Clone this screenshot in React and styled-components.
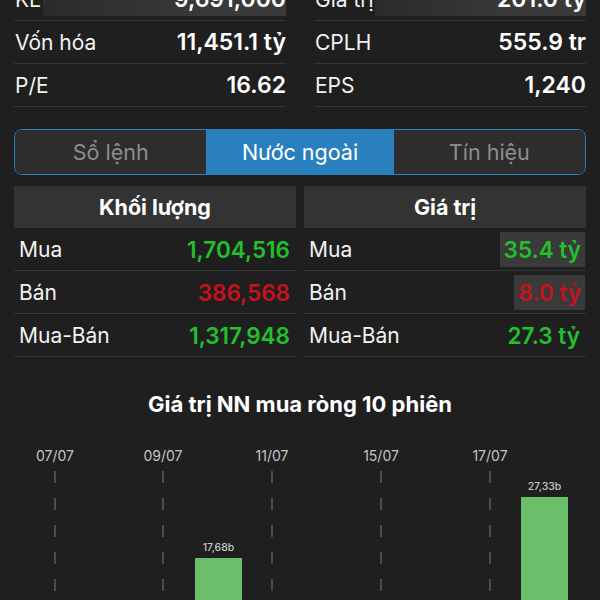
import React from "react";
import styled, { createGlobalStyle } from "styled-components";

const GlobalStyle = createGlobalStyle`
  html, body {
    margin: 0;
    padding: 0;
    background: #1f1f1f;
  }
  body {
    font-family: Inter, "Noto Sans", "DejaVu Sans", sans-serif;
  }
`;

const green = "#22c02c";
const red = "#c8111b";
const blue = "#2a7fbf";

const Page = styled.div`
  width: 600px;
  height: 600px;
  overflow: hidden;
  background: #1f1f1f;
  color: #fff;
`;

const Stats = styled.div`
  display: grid;
  grid-template-columns: 1fr 1fr;
  column-gap: 28px;
  padding: 0 14px;
  margin-top: -22px;
`;

const StatColumn = styled.div`
  display: flex;
  flex-direction: column;
`;

const StatRow = styled.div`
  height: 43px;
  display: flex;
  align-items: center;
  justify-content: space-between;
  border-bottom: 1px solid #363636;
  box-sizing: border-box;
  font-size: 21px;
`;

const StatLabel = styled.span`
  padding-left: 1px;
  color: #f2f2f2;
`;

const StatValue = styled.span`
  font-weight: 600;
  font-size: 23px;
  color: #fff;
  padding: 3px 0 3px 4px;
  ${({ flash }) =>
    flash &&
    `flex: 1;
     text-align: right;
     margin-left: ${flash}px;
     background: linear-gradient(90deg, #2b2b2b, #383838 60%, #3a3a3a);`}
`;

const Tabs = styled.div`
  margin: 22px 14px 0;
  height: 46px;
  display: flex;
  border: 1.5px solid ${blue};
  border-radius: 8px;
  overflow: hidden;
  box-sizing: border-box;
`;

const Tab = styled.div`
  flex: ${({ grow }) => grow};
  display: flex;
  align-items: center;
  justify-content: center;
  font-size: 21.5px;
  background: ${({ active }) => (active ? blue : "#2d2d2d")};
  color: ${({ active }) => (active ? "#fff" : "#8d8d8d")};
`;

const Tables = styled.div`
  display: grid;
  grid-template-columns: 1fr 1fr;
  column-gap: 8px;
  margin: 11px 14px 0;
`;

const Table = styled.div`
  display: flex;
  flex-direction: column;
`;

const TableHeader = styled.div`
  height: 42px;
  display: flex;
  align-items: center;
  justify-content: center;
  background: #333;
  font-size: 21.5px;
  font-weight: 700;
  color: #fff;
`;

const TableRow = styled.div`
  height: 43px;
  display: flex;
  align-items: center;
  justify-content: space-between;
  border-bottom: 1px solid #363636;
  box-sizing: border-box;
  padding: 1px 1px 0 5px;
  font-size: 21px;
`;

const RowLabel = styled.span`
  color: #f2f2f2;
`;

const RowValue = styled.span`
  font-size: 22.5px;
  font-weight: 600;
  color: ${({ tone }) => (tone === "down" ? red : green)};
  padding: ${({ boxed }) => (boxed ? "4px 4px" : "0 5px")};
  background: ${({ boxed }) => (boxed ? "#3a3a3a" : "transparent")};
`;

const ChartTitle = styled.div`
  margin-top: 34px;
  text-align: center;
  font-size: 22px;
  font-weight: 700;
  color: #fff;
`;

const ChartWrap = styled.div`
  margin-top: 20px;
  height: 170px;
`;

const stats = [
  [
    { label: "KL", value: "9,691,000", flash: 2 },
    { label: "Vốn hóa", value: "11,451.1 tỷ" },
    { label: "P/E", value: "16.62" },
  ],
  [
    { label: "Giá trị", value: "201.0 tỷ", flash: 1 },
    { label: "CPLH", value: "555.9 tr" },
    { label: "EPS", value: "1,240" },
  ],
];

const volume = [
  { label: "Mua", value: "1,704,516", tone: "up" },
  { label: "Bán", value: "386,568", tone: "down" },
  { label: "Mua-Bán", value: "1,317,948", tone: "up" },
];

const amount = [
  { label: "Mua", value: "35.4 tỷ", tone: "up", boxed: true },
  { label: "Bán", value: "8.0 tỷ", tone: "down", boxed: true },
  { label: "Mua-Bán", value: "27.3 tỷ", tone: "up" },
];

const dates = [
  { x: 55, label: "07/07" },
  { x: 163, label: "09/07" },
  { x: 272, label: "11/07" },
  { x: 381, label: "15/07" },
  { x: 490, label: "17/07" },
];

const bars = [
  { x: 195, top: 121, label: "17,68b" },
  { x: 521, top: 60, label: "27,33b" },
];

const NetChart = () => (
  <svg width="600" height="170" viewBox="0 0 600 170">
    {dates.map((d) => (
      <g key={d.label}>
        <text
          x={d.x}
          y={24}
          textAnchor="middle"
          fill="#c4c4c4"
          fontSize="14"
          fontFamily="Inter, sans-serif"
        >
          {d.label}
        </text>
        <line
          x1={d.x}
          x2={d.x}
          y1={34}
          y2={170}
          stroke="#6a6a6a"
          strokeWidth="1.2"
          strokeDasharray="12 15"
        />
      </g>
    ))}
    {bars.map((b) => (
      <g key={b.label}>
        <text
          x={b.x + 23.5}
          y={b.top - 7}
          textAnchor="middle"
          fill="#c4c4c4"
          fontSize="10.5"
          fontWeight="500"
          fontFamily="Inter, sans-serif"
        >
          {b.label}
        </text>
        <rect x={b.x} y={b.top} width="47" height={170 - b.top} fill="#6cbf6a" />
      </g>
    ))}
  </svg>
);

export default function App() {
  return (
    <Page>
      <GlobalStyle />
      <Stats>
        {stats.map((col, i) => (
          <StatColumn key={i}>
            {col.map((s) => (
              <StatRow key={s.label}>
                <StatLabel>{s.label}</StatLabel>
                <StatValue flash={s.flash}>{s.value}</StatValue>
              </StatRow>
            ))}
          </StatColumn>
        ))}
      </Stats>

      <Tabs>
        <Tab grow={192}>Sổ lệnh</Tab>
        <Tab grow={188} active>
          Nước ngoài
        </Tab>
        <Tab grow={192}>Tín hiệu</Tab>
      </Tabs>

      <Tables>
        <Table>
          <TableHeader>Khối lượng</TableHeader>
          {volume.map((r) => (
            <TableRow key={r.label}>
              <RowLabel>{r.label}</RowLabel>
              <RowValue tone={r.tone}>{r.value}</RowValue>
            </TableRow>
          ))}
        </Table>
        <Table>
          <TableHeader>Giá trị</TableHeader>
          {amount.map((r) => (
            <TableRow key={r.label}>
              <RowLabel>{r.label}</RowLabel>
              <RowValue tone={r.tone} boxed={r.boxed}>
                {r.value}
              </RowValue>
            </TableRow>
          ))}
        </Table>
      </Tables>

      <ChartTitle>Giá trị NN mua ròng 10 phiên</ChartTitle>
      <ChartWrap>
        <NetChart />
      </ChartWrap>
    </Page>
  );
}
